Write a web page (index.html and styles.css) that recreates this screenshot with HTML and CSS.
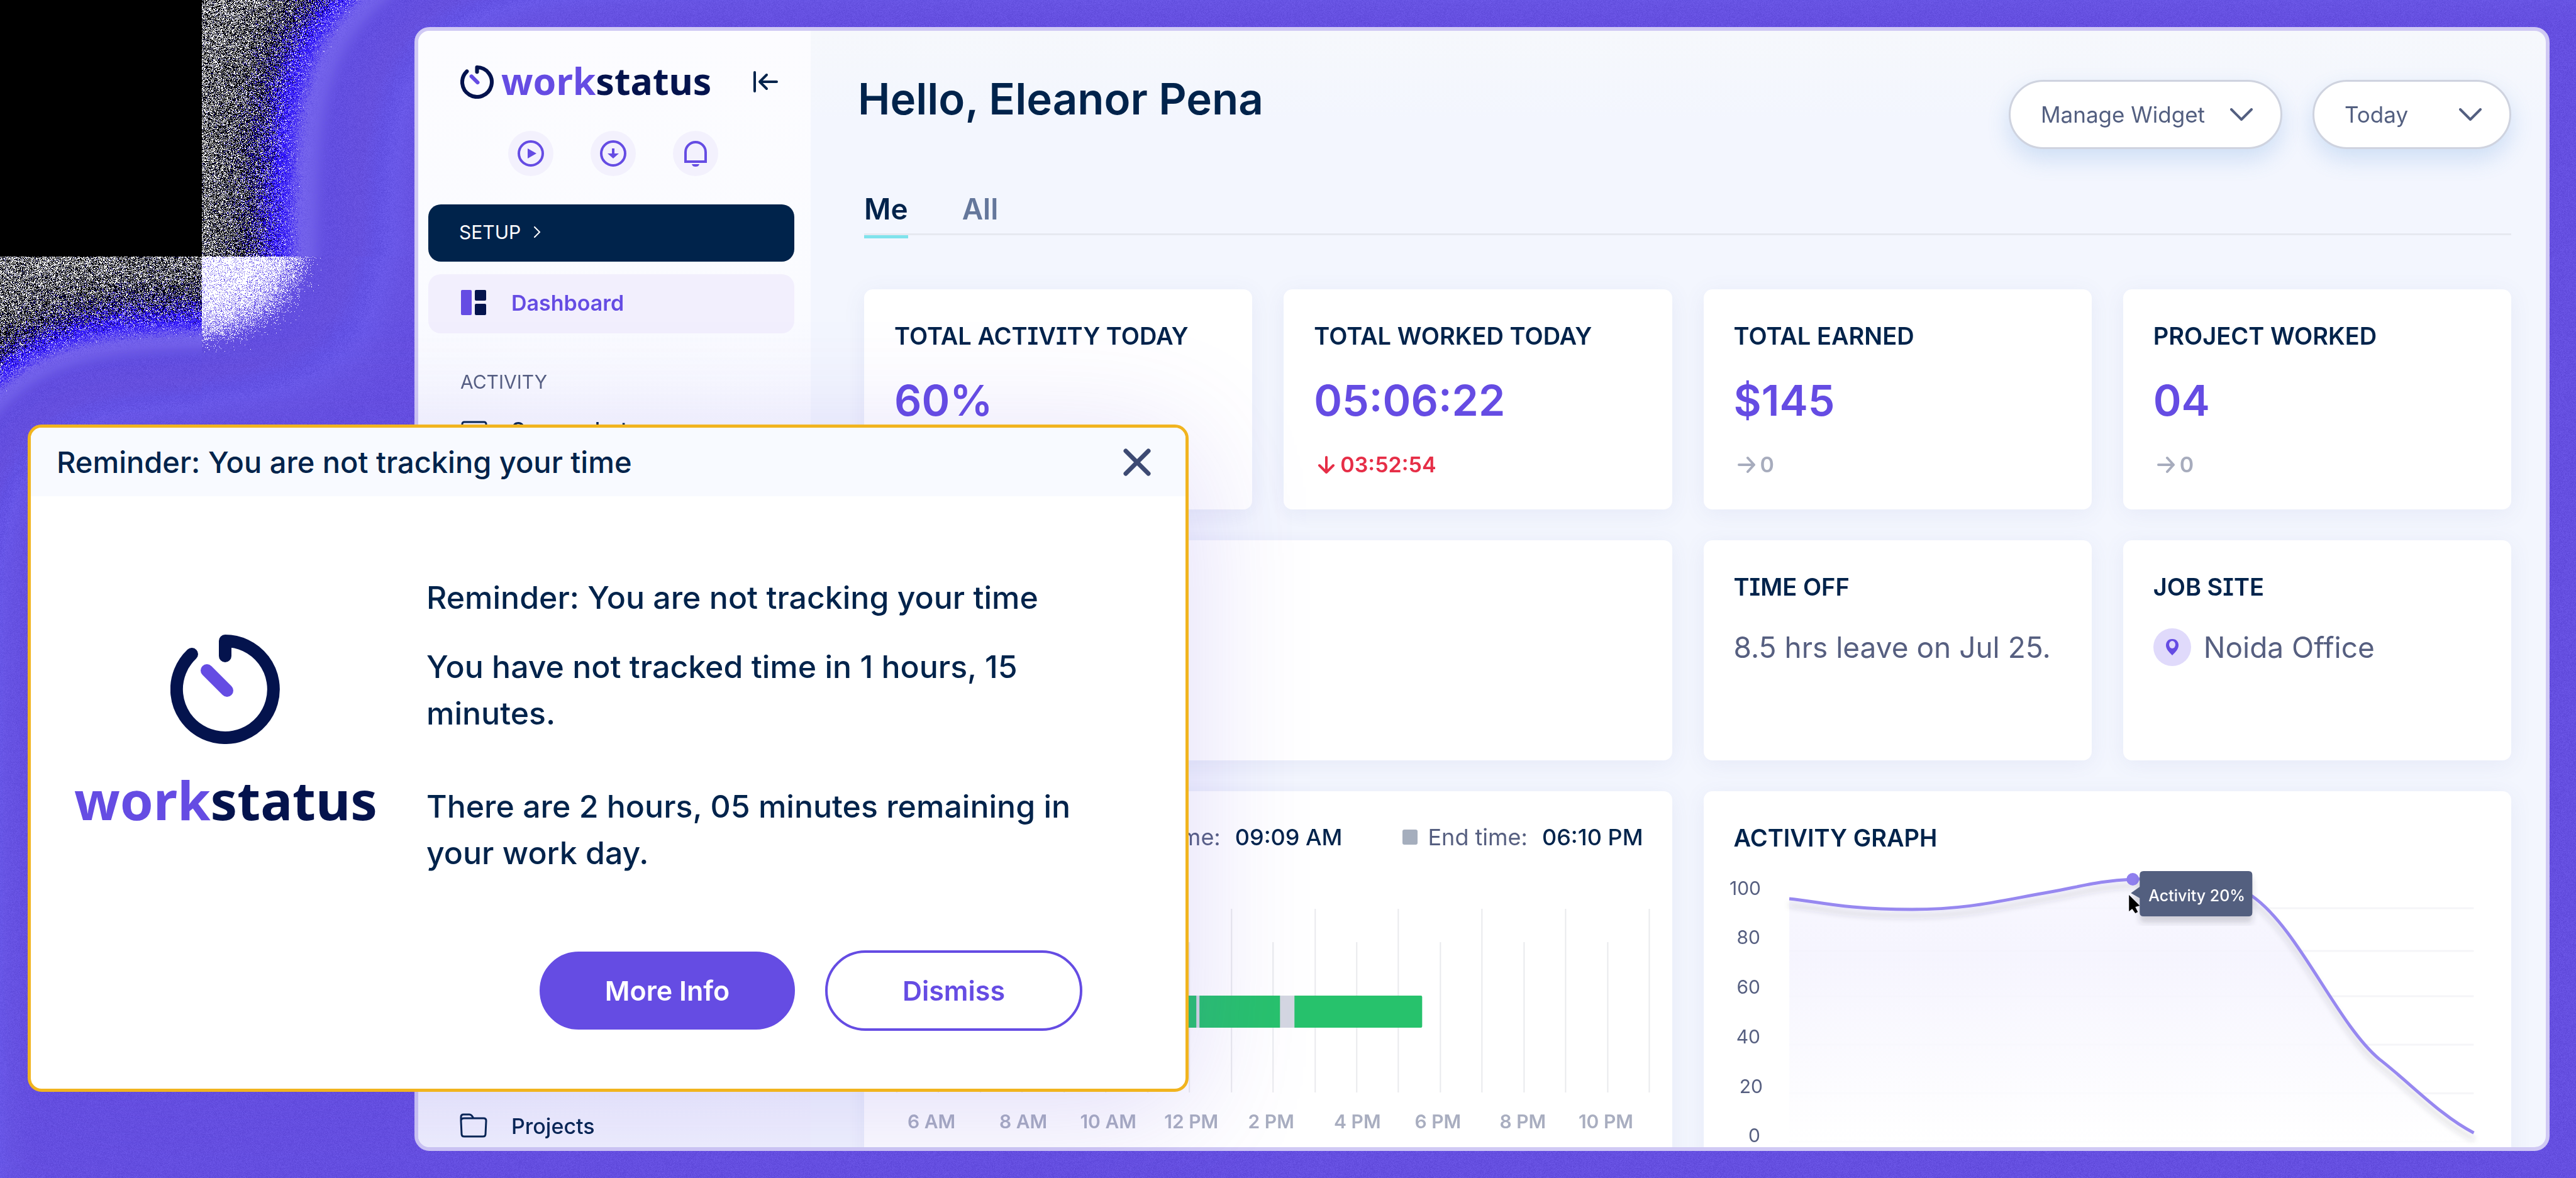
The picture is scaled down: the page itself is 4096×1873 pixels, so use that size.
FILE: index.html
```html
<!DOCTYPE html>
<html lang="en">
<head>
<meta charset="utf-8">
<title>Workstatus – Dashboard</title>
<link rel="stylesheet" href="styles.css">
</head>
<body>
<canvas class="backdrop" id="backdrop" aria-hidden="true"></canvas>

<svg class="defs" aria-hidden="true">
  <symbol id="mark" viewBox="0 0 174 174">
    <path d="M34 31 A77 77 0 1 0 87 10 V34" fill="none" stroke="#04134d" stroke-width="20" stroke-linecap="round" stroke-linejoin="round"/>
    <path d="M58 57 L90 89" fill="none" stroke="#654ce3" stroke-width="20" stroke-linecap="round"/>
  </symbol>
</svg>

<div class="window">
  <aside class="sidebar">
    <div class="brand">
      <svg class="brand-mark"><use href="#mark"/></svg>
      <span class="wordmark"><span class="wordmark-a">work</span>status</span>
      <button class="icon-button collapse" aria-label="Collapse menu">
        <svg viewBox="0 0 40 34" width="40" height="34" fill="none" stroke="#00234b" stroke-width="4" stroke-linecap="round" stroke-linejoin="round"><path d="M3 2V32M11 17H38M22 6 11 17 22 28"/></svg>
      </button>
    </div>
    <div class="quick">
      <button class="icon-button round" aria-label="Start timer"><svg viewBox="0 0 44 44" width="44" height="44"><circle cx="22" cy="22" r="19" fill="none" stroke="#654ce3" stroke-width="4"/><path d="M17 14 31 22 17 30Z" fill="#654ce3"/></svg></button>
      <button class="icon-button round" aria-label="Download"><svg viewBox="0 0 44 44" width="44" height="44"><circle cx="22" cy="22" r="19" fill="none" stroke="#654ce3" stroke-width="4"/><path d="M20 14H24V22H31L22 30 13 22H20Z" fill="#654ce3"/></svg></button>
      <button class="icon-button round" aria-label="Notifications"><svg viewBox="0 0 44 44" width="44" height="44"><path d="M6 35V20a16 16 0 0 1 32 0V35Z" fill="none" stroke="#654ce3" stroke-width="4"/><path d="M16 39H28C27 42 25 43 22 43S17 42 16 39Z" fill="#654ce3"/></svg></button>
    </div>
    <button class="setup">SETUP <svg viewBox="0 0 12 18" width="12" height="18" fill="none" stroke="#fff" stroke-width="2" stroke-linecap="round"><path d="M2 1 10 9 2 17"/></svg></button>
    <nav class="nav">
      <a class="nav-item active" href="#"><svg viewBox="0 0 44 40" width="44" height="40"><rect x="2" width="17" height="40" rx="2" fill="#654ce3"/><rect x="24" width="18" height="17" rx="2" fill="#04134d"/><rect x="24" y="22" width="18" height="18" rx="2" fill="#04134d"/></svg>Dashboard</a>
      <p class="nav-title">ACTIVITY</p>
      <a class="nav-item" href="#"><svg viewBox="0 0 44 40" width="44" height="40" fill="none" stroke="#00234b" stroke-width="3"><rect x="4" y="8" width="38" height="24" rx="3"/><path d="M14 38H32"/></svg>Screenshots</a>
      <a class="nav-item last" href="#"><svg viewBox="0 0 44 40" width="44" height="40" fill="none" stroke="#00234b" stroke-width="3" stroke-linejoin="round"><path d="M2 12V6Q2 2 6 2H15Q18 2 20 5L22 8H38Q42 8 42 12L41 33Q41 37 37 37H7Q3 37 3 33L2 12Q2 8 7 8H22"/></svg>Projects</a>
    </nav>
  </aside>

  <main class="main">
    <header class="top">
      <h1>Hello, Eleanor Pena</h1>
      <div class="filters">
        <button class="pill">Manage Widget <svg viewBox="0 0 36 20" width="36" height="20"><path d="M2 2 18 18 34 2"/></svg></button>
        <button class="pill pill-day">Today <svg viewBox="0 0 36 20" width="36" height="20"><path d="M2 2 18 18 34 2"/></svg></button>
      </div>
    </header>
    <nav class="tabs"><a class="tab on" href="#">Me</a><a class="tab" href="#">All</a></nav>

    <div class="cards">
      <section class="card"><h2>TOTAL ACTIVITY TODAY</h2><p class="value">60%</p></section>
      <section class="card"><h2>TOTAL WORKED TODAY</h2><p class="value">05:06:22</p>
        <p class="delta down"><svg viewBox="0 0 28 28" width="28" height="28"><path d="M14 2V25M3 15 14 26 25 15"/></svg>03:52:54</p></section>
      <section class="card"><h2>TOTAL EARNED</h2><p class="value">$145</p>
        <p class="delta"><svg viewBox="0 0 28 28" width="28" height="28"><path d="M2 14H26M16 3 26 14 16 25"/></svg>0</p></section>
      <section class="card"><h2>PROJECT WORKED</h2><p class="value">04</p>
        <p class="delta"><svg viewBox="0 0 28 28" width="28" height="28"><path d="M2 14H26M16 3 26 14 16 25"/></svg>0</p></section>

      <section class="card wide"></section>
      <section class="card"><h2>TIME OFF</h2><p class="note">8.5 hrs leave on Jul 25.</p></section>
      <section class="card"><h2>JOB SITE</h2><p class="note"><span class="pin"><svg viewBox="0 0 24 28" width="24" height="28"><path d="M12 1C5 1 2 6 2 11 2 17 7 22 12 27 17 22 22 17 22 11 22 6 19 1 12 1Z" fill="#654ce3"/><ellipse cx="12" cy="10" rx="5" ry="6" fill="#e0dafb"/></svg></span>Noida Office</p></section>

      <section class="card wide tall timeline">
        <div class="legend">
          <span class="key"></span><span>Start time:</span><b>09:09 AM</b>
          <span class="key key-end"></span><span>End time:</span><b>06:10 PM</b>
        </div>
        <svg class="chart" viewBox="1374 1418 1284 400">
          <path class="tick" d="M1426 1445V1737M1559 1445V1737M1692 1445V1737M1825 1445V1737M1958 1445V1737M2091 1445V1737M2223 1445V1737M2356 1445V1737M2489 1445V1737M2622 1445V1737M1492 1498V1737M1625 1498V1737M1758 1498V1737M1891 1498V1737M2024 1498V1737M2157 1498V1737M2290 1498V1737M2423 1498V1737M2556 1498V1737"/>
          <rect x="1640" y="1583" width="621" height="51" rx="2" fill="#27c26c"/>
          <path d="M1902 1583h5v51h-5zM2035 1583h23v51h-23z" fill="#d4d7e1"/>
          <g class="hours">
            <text x="1481" y="1794">6 AM</text><text x="1627" y="1794">8 AM</text><text x="1762" y="1794">10 AM</text><text x="1894" y="1794">12 PM</text><text x="2021" y="1794">2 PM</text><text x="2158" y="1794">4 PM</text><text x="2286" y="1794">6 PM</text><text x="2421" y="1794">8 PM</text><text x="2553" y="1794">10 PM</text>
          </g>
        </svg>
      </section>

      <section class="card wide tall graph">
        <h2>ACTIVITY GRAPH</h2>
        <svg class="chart" viewBox="2709 1373 1284 460">
          <defs>
            <linearGradient id="area" x1="0" y1="0" x2="0" y2="1"><stop offset="0" stop-color="#f7f6ff"/><stop offset=".3" stop-color="#f4f3fe"/><stop offset="1" stop-color="#fff"/></linearGradient>
            <filter id="soft" x="-10%" y="-10%" width="120%" height="130%"><feDropShadow dx="0" dy="10" stdDeviation="5" flood-color="#303040" flood-opacity=".2"/></filter>
          </defs>
          <path class="grid" d="M2845 1444H3933M2845 1512H3933M2845 1584H3933M2845 1661H3933M2845 1738H3933M2845 1815H3933"/>
          <path opacity=".85" fill="url(#area)" d="M2845 1429C2890 1433 2930 1446 3040 1446C3130 1446 3180 1432 3261 1418C3310 1409 3340 1400 3391 1398C3450 1396 3530 1390 3581 1425C3655 1477 3715 1627 3783 1684C3830 1720 3880 1774 3933 1801V1818H2845Z"/>
          <path filter="url(#soft)" fill="none" stroke="#9788f0" stroke-width="5" d="M2845 1429C2890 1433 2930 1446 3040 1446C3130 1446 3180 1432 3261 1418C3310 1409 3340 1400 3391 1398C3450 1396 3530 1390 3581 1425C3655 1477 3715 1627 3783 1684C3830 1720 3880 1774 3933 1801"/>
          <circle cx="3391" cy="1398" r="10" fill="#8f7fee"/>
          <path filter="url(#soft)" d="M3408 1385H3575Q3581 1385 3581 1391V1451Q3581 1457 3575 1457H3408Q3402 1457 3402 1451V1428L3388 1420 3402 1410V1391Q3402 1385 3408 1385Z" fill="#535f7f"/>
          <path d="M3385 1423V1449L3390 1445 3395 1452 3399 1450 3395 1442 3402 1440Z"/>
          <text class="tip" x="3416" y="1433">Activity 20%</text>
          <g class="scale">
            <text x="2800" y="1423">100</text><text x="2799" y="1501">80</text><text x="2799" y="1580">60</text><text x="2799" y="1659">40</text><text x="2803" y="1738">20</text><text x="2799" y="1816">0</text>
          </g>
        </svg>
      </section>
    </div>
  </main>
</div>

<div class="dialog" role="dialog" aria-labelledby="dialog-title">
  <div class="dialog-head">
    <span id="dialog-title">Reminder: You are not tracking your time</span>
    <button class="icon-button" aria-label="Close"><svg viewBox="0 0 46 46" width="46" height="46" fill="none" stroke="#3d4a73" stroke-width="7" stroke-linecap="round"><path d="M5 5 41 41M41 5 5 41"/></svg></button>
  </div>
  <div class="dialog-body">
    <div class="dialog-logo">
      <svg class="big-mark"><use href="#mark"/></svg>
      <span class="wordmark big"><span class="wordmark-a">work</span>status</span>
    </div>
    <div class="dialog-text">
      <h3>Reminder: You are not tracking your time</h3>
      <p>You have not tracked time in 1 hours, 15 minutes.</p>
      <p>There are 2 hours, 05 minutes remaining in your work day.</p>
      <div class="actions">
        <button class="action primary">More Info</button>
        <button class="action">Dismiss</button>
      </div>
    </div>
  </div>
</div>
<script src="backdrop.js"></script>
</body>
</html>
```

FILE: styles.css
```css
* { box-sizing: border-box; }
body {
  margin: 0;
  height: 100vh;
  padding: 43px 42px 43px 659px;
  overflow: hidden;
  position: relative;
  background: #654fe0;
  color: #00234b;
  font-family: Inter, "Liberation Sans", sans-serif;
}
h1, h2, h3, p { margin: 0; }
a { color: inherit; text-decoration: none; }
button { font: inherit; color: inherit; background: none; border: 0; padding: 0; }
svg { display: block; flex: none; }
.defs { position: absolute; width: 0; height: 0; }
.backdrop { position: absolute; left: 0; top: 0; width: 100%; height: 100%; }

.window {
  position: relative;
  display: flex;
  height: 100%;
  border: 6px solid #d0c9f4;
  border-radius: 24px;
  overflow: hidden;
  background: linear-gradient(#f6f8fc, #f3f6fe 8%);
}

/* Sidebar */
.sidebar {
  width: 624px;
  flex: none;
  display: flex;
  flex-direction: column;
  padding: 52px 26px 0 16px;
  background: linear-gradient(#fcfcff, #fafbff 25%, #f3f4fe);
}
.brand { display: flex; align-items: center; height: 58px; padding-left: 51px; }
.brand-mark { width: 53px; height: 53px; }
.wordmark { font: 700 59px/58px "Noto Sans", sans-serif; color: #04134d; }
.wordmark-a { color: #654ce3; }
.brand .wordmark { margin-left: 12px; padding-bottom: 4px; }
.collapse { margin: 0 26px 0 auto; }
.quick { display: flex; justify-content: center; gap: 59px; margin: 49px 0 45px 6px; }
.round { width: 72px; height: 72px; border-radius: 50%; background: #f3f1fd; display: grid; place-items: center; }
.setup {
  display: flex; align-items: center; gap: 20px;
  height: 91px; flex: none; padding: 0 0 4px 49px; border-radius: 20px;
  background: #00234b; color: #fff; font-size: 30px;
}
.nav { display: flex; flex-direction: column; flex: 1; padding-top: 20px; }
.nav-item { display: flex; align-items: center; gap: 38px; height: 94px; padding-left: 50px; font-size: 34px; font-weight: 500; }
.nav-item.active { background: #f2effd; border-radius: 20px; color: #654ce3; font-weight: 600; padding-bottom: 4px; }
.nav-title { padding: 59px 0 11px 51px; font-size: 30px; line-height: 36px; color: #565f80; }
.last { margin-top: auto; margin-bottom: -13px; }

/* Main column */
.main { flex: 1; min-width: 0; padding: 78px 55px 0 85px; }
.top { display: flex; justify-content: space-between; align-items: flex-start; height: 178px; }
h1 { font-size: 69px; font-weight: 600; line-height: 60px; margin-left: -10px; }
.filters { display: flex; gap: 48px; }
.pill {
  display: flex; align-items: center; justify-content: space-between;
  width: 435px; height: 110px; padding: 0 44px 0 48px;
  background: #fff; border: 3px solid #cfd3df; border-radius: 55px;
  box-shadow: 0 16px 36px rgba(60, 130, 210, .2);
  font-size: 35px; color: #535f80;
}
.pill-day { width: 316px; }
.pill svg { fill: none; stroke: #535f80; stroke-width: 4; stroke-linecap: round; stroke-linejoin: round; }
.tabs { display: flex; gap: 86px; height: 69px; border-bottom: 3px solid #e6e9f0; }
.tab { height: 74px; font-size: 46px; line-height: 54px; font-weight: 600; color: #64779b; }
.tab.on { color: #00234b; border-bottom: 5px solid #7fe3ec; }

.cards { display: grid; grid-template-columns: repeat(4, 1fr); grid-auto-rows: 350px; gap: 49px 50px; margin-top: 86px; }
.card { background: #fff; border-radius: 14px; padding: 50px 48px; box-shadow: 0 6px 36px rgba(80, 90, 160, .08); min-width: 0; }
.wide { grid-column: span 2; }
.tall { height: 660px; padding: 0; }
h2 { font-size: 38px; font-weight: 600; line-height: 48px; font-feature-settings: "cv08"; }
.value { font-size: 68px; font-weight: 600; line-height: 80px; margin-top: 38px; color: #654ce3; }
.delta { display: flex; align-items: center; gap: 8px; margin-top: 43px; padding-left: 6px; font-size: 34px; line-height: 40px; font-weight: 600; color: #a7acbd; }
.delta svg { fill: none; stroke: currentColor; stroke-width: 4; stroke-linecap: round; stroke-linejoin: round; }
.down { color: #e62e47; }
.note { display: flex; align-items: center; gap: 20px; margin-top: 42px; font-size: 46px; line-height: 60px; color: #565f80; white-space: nowrap; }
.pin { width: 60px; height: 60px; border-radius: 50%; background: #e0dafb; display: grid; place-items: center; }

.legend { display: flex; align-items: center; justify-content: flex-end; height: 160px; padding: 0 46px 14px 0; font-size: 36px; color: #565f80; }
.legend b { font-weight: 500; color: #00234b; margin-left: 23px; }
.key { width: 24px; height: 24px; border-radius: 3px; background: #27c26c; margin-right: 16px; }
.key-end { background: #a5aebd; margin-left: 96px; }
.chart { width: 100%; height: auto; }
.tick { stroke: #e9eaed; stroke-width: 2; fill: none; }
.hours { font-size: 30px; font-weight: 600; fill: #a9aec0; text-anchor: middle; }
.graph h2 { padding: 50px 48px 17px; font-feature-settings: normal; }
.grid { stroke: #f5f5f8; stroke-width: 3; }
.scale { font-size: 30px; fill: #565f80; text-anchor: end; }
.tip { font-size: 25px; font-weight: 500; fill: #fff; }

/* Reminder dialog */
.dialog {
  position: absolute; left: 44px; top: 675px; width: 1846px; height: 1061px;
  border: 5px solid #f1b41f; border-radius: 22px; background: #fff; overflow: hidden;
  box-shadow: 0 30px 200px rgba(101, 76, 227, .2);
}
.dialog-head {
  display: flex; align-items: center; justify-content: space-between;
  height: 109px; padding: 0 54px 0 41px; background: #f8faff;
  font-size: 47px; font-weight: 500;
}
.dialog-body { display: flex; }
.dialog-logo { width: 629px; padding: 220px 0 0 69px; display: flex; flex-direction: column; align-items: flex-start; }
.big-mark { width: 174px; height: 174px; margin-left: 153px; }
.big { font-size: 85px; line-height: 84px; margin-top: 46px; }
.dialog-text { flex: 1; padding: 124px 130px 0 0; font-size: 50px; line-height: 74px; font-weight: 500; }
h3 { font: inherit; margin-bottom: 36px; }
.dialog-text p + p { margin-top: 74px; }
.actions { display: flex; align-items: center; gap: 48px; margin: 118px 0 0 180px; }
.action { width: 409px; height: 128px; border: 4px solid #654ce3; border-radius: 64px; font-size: 43px; font-weight: 600; line-height: 50px; color: #654ce3; }
.primary { width: 406px; height: 124px; background: #654ce3; color: #fff; }
```

FILE: backdrop.js
```js
// Violet glow behind the window and the dialog, dissolving into grain at the top left.
(function () {
  var canvas = document.getElementById('backdrop');
  var w = canvas.width = canvas.clientWidth;
  var h = canvas.height = canvas.clientHeight;
  var ctx = canvas.getContext('2d');
  var img = ctx.createImageData(w, h);
  var px = img.data;
  var seed = 12345;
  function rnd() {
    seed ^= seed << 13; seed ^= seed >>> 17; seed ^= seed << 5;
    return (seed >>> 0) / 4294967296;
  }
  function cdf(z) { return 1 / (1 + Math.exp(-1.702 * z)); }
  function table(n, edge, sigma) {
    var t = new Float32Array(n);
    for (var i = 0; i < n; i++) t[i] = cdf((i - edge) / sigma);
    return t;
  }
  function ramp(stops, v) {
    var k = 1;
    while (stops[k][0] < v) k++;
    var p = stops[k - 1], q = stops[k], f = (v - p[0]) / (q[0] - p[0]);
    return p.map(function (c, n) { return c + (q[n] - c) * f; });
  }
  var wx = table(w, 659, 180), wy = table(h, 10, 130);
  var dx = table(w, 24, 130), dy = table(h, 675, 140);
  var clipX = 321, clipY = 408;
  // glow strength, then r, g, b
  var glow = [[0, 42, 16, 250], [.115, 42, 16, 250], [.14, 112, 94, 236], [.165, 116, 99, 234], [.2, 98, 78, 224], [.3, 102, 80, 222], [.36, 99, 82, 228], [.41, 105, 88, 232], [.48, 103, 83, 226], [.58, 101, 79, 224], [2, 101, 79, 224]];
  var specks = [[0, .5], [.035, .46], [.08, .2], [.1, .2], [.125, .03], [.14, 0], [2, 0]];
  var white = [[0, .86], [.13, .82], [.16, .6], [.21, .03], [.24, 0], [2, 0]];
  var N = 2000, glowT = [], speckT = [], whiteT = [];
  for (var t = 0; t <= N; t++) {
    glowT.push(ramp(glow, t / N * 1.2));
    speckT.push(ramp(specks, t / N * 1.2)[1]);
    whiteT.push(ramp(white, t / N * 1.2)[1]);
  }
  for (var y = 0; y < h; y++) {
    for (var x = 0; x < w; x++) {
      var i = (y * w + x) * 4;
      var a = x >= clipX ? wx[x] * wy[y] : 0;
      var b = y >= clipY ? dx[x] * dy[y] : 0;
      var r = 0, g = 0, bl = 0;
      if (a || b) {
        var u = 1 - (1 - a) * (1 - b);
        var both = a > 0 && b > 0;
        var n = rnd(), m = rnd() - .5;
        var v = Math.max(0, u + m * .035);
        var at = Math.round(v / 1.2 * N);
        if (n < (both ? whiteT[at] : speckT[at])) {
          r = g = bl = 255;
        } else if (!both && rnd() > Math.pow(Math.max(0, (v - .045) / .065), 2)) {
          bl = rnd() < .2 ? 70 : 0;
        } else {
          var c = both && v < .15 ? glowT[250] : glowT[at];
          var j = m * 16;
          r = c[1] + j; g = c[2] + j; bl = c[3] + j;
        }
      }
      px[i] = r; px[i + 1] = g; px[i + 2] = bl; px[i + 3] = 255;
    }
  }
  ctx.putImageData(img, 0, 0);
})();
```
